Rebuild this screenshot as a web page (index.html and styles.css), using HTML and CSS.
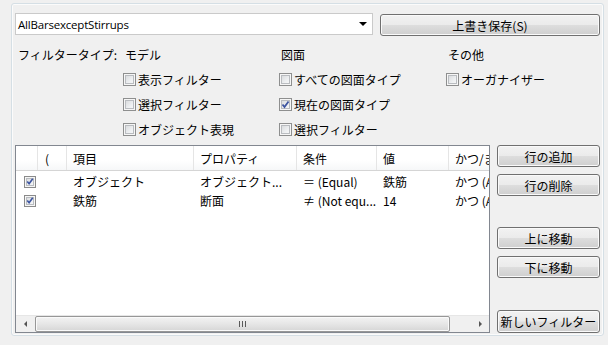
FILE: index.html
```html
<!DOCTYPE html>
<html lang="ja">
<head>
    <meta charset="UTF-8">
    <title>フィルター</title>
    <link rel="stylesheet" href="styles.css">
</head>
<body>
    <div class="panel">
        <div class="top-row">
            <div class="combo">
                <span class="combo-text">AllBarsexceptStirrups</span>
                <span class="combo-arrow"></span>
            </div>
            <button class="btn save-btn">上書き保存(S)</button>
        </div>

        <div class="filter-grid">
            <div class="ft-label">フィルタータイプ:</div>
            <div class="group-title">モデル</div>
            <div class="group-title">図面</div>
            <div class="group-title">その他</div>

            <div></div>
            <label class="check"><span class="cb"></span>表示フィルター</label>
            <label class="check"><span class="cb"></span>すべての図面タイプ</label>
            <label class="check"><span class="cb"></span>オーガナイザー</label>

            <div></div>
            <label class="check"><span class="cb"></span>選択フィルター</label>
            <label class="check"><span class="cb checked"><svg viewBox="0 0 11 11"><path d="M2.5 5.5 L4.5 8 L8.5 2.5" /></svg></span>現在の図面タイプ</label>
            <div></div>

            <div></div>
            <label class="check"><span class="cb"></span>オブジェクト表現</label>
            <label class="check"><span class="cb"></span>選択フィルター</label>
            <div></div>
        </div>

        <div class="bottom">
            <div class="table">
                <div class="t-head t-row">
                    <div class="cell"></div>
                    <div class="cell">(</div>
                    <div class="cell">項目</div>
                    <div class="cell">プロパティ</div>
                    <div class="cell">条件</div>
                    <div class="cell">値</div>
                    <div class="cell clip">かつ/ま</div>
                </div>
                <div class="t-body">
                    <div class="t-row">
                        <div class="cell"><span class="cb small checked"><svg viewBox="0 0 11 11"><path d="M2.5 5.5 L4.5 8 L8.5 2.5" /></svg></span></div>
                        <div class="cell"></div>
                        <div class="cell">オブジェクト</div>
                        <div class="cell">オブジェクト...</div>
                        <div class="cell">＝ (Equal)</div>
                        <div class="cell">鉄筋</div>
                        <div class="cell clip">かつ (A</div>
                    </div>
                    <div class="t-row">
                        <div class="cell"><span class="cb small checked"><svg viewBox="0 0 11 11"><path d="M2.5 5.5 L4.5 8 L8.5 2.5" /></svg></span></div>
                        <div class="cell"></div>
                        <div class="cell">鉄筋</div>
                        <div class="cell">断面</div>
                        <div class="cell">≠ (Not equ...</div>
                        <div class="cell">14</div>
                        <div class="cell clip">かつ (A</div>
                    </div>
                </div>
                <div class="hscroll">
                    <div class="arrow-btn"><span class="tri-left"></span></div>
                    <div class="thumb"><span class="grip"></span></div>
                    <div class="track"></div>
                    <div class="arrow-btn"><span class="tri-right"></span></div>
                </div>
            </div>

            <div class="side-buttons">
                <button class="btn">行の追加</button>
                <button class="btn">行の削除</button>
                <button class="btn gap-big">上に移動</button>
                <button class="btn">下に移動</button>
                <button class="btn push-end">新しいフィルター</button>
            </div>
        </div>
    </div>
</body>
</html>
```

FILE: styles.css
```css
body {
    margin: 0;
    background-color: #f0f0f0;
    font-family: "Noto Sans CJK JP", sans-serif;
    font-size: 12px;
    color: #000;
}
.panel {
    box-sizing: border-box;
    margin: 3px 0 0 11px;
    width: 593px;
    height: 333px;
    padding: 9px 3px 0 3px;
    border: 1px solid #d5dfe5;
    border-radius: 3px;
    box-shadow: inset 0 0 0 1px #fbfbfb;
    display: flex;
    flex-direction: column;
}
.top-row {
    display: flex;
    gap: 7px;
}
.combo {
    box-sizing: border-box;
    width: 358px;
    height: 22px;
    background-color: #fff;
    border: 1px solid #cacaca;
    display: flex;
    align-items: center;
    padding: 0 0 0 2px;
    font-family: "Open Sans", "Noto Sans CJK JP", sans-serif;
    font-size: 11.5px;
    letter-spacing: -0.2px;
}
.combo-text {
    flex: 1;
}
.combo-arrow {
    width: 0;
    height: 0;
    margin-right: 5px;
    border-left: 4px solid transparent;
    border-right: 4px solid transparent;
    border-top: 4px solid #000;
}
.btn {
    box-sizing: border-box;
    height: 22px;
    padding: 0;
    font-family: "Noto Sans CJK JP", sans-serif;
    font-size: 12px;
    color: #000;
    border: 1px solid #707070;
    border-radius: 3px;
    background: linear-gradient(#f2f2f2 0%, #ebebeb 48%, #dddddd 52%, #cfcfcf 100%);
    box-shadow: inset 0 0 0 1px #fafafa;
}
.save-btn {
    width: 220px;
    margin-top: 1px;
}
.filter-grid {
    display: grid;
    grid-template-columns: 108px 156px 167px 1fr;
    grid-auto-rows: 25px;
    align-items: center;
    margin-top: 6px;
}
.ft-label {
    padding-left: 3px;
}
.group-title {
    padding-left: 2px;
}
.check {
    display: flex;
    align-items: center;
    gap: 2px;
}
.cb {
    box-sizing: border-box;
    width: 13px;
    height: 13px;
    border: 1px solid #8e8f8f;
    background: linear-gradient(135deg, #d2d4d6 0%, #eef0f2 60%, #fbfbfb 100%);
    box-shadow: inset 0 0 0 1px #f6f6f6, inset 0 0 0 2px #b9bcc0;
    display: inline-flex;
    align-items: center;
    justify-content: center;
}
.cb svg {
    width: 11px;
    height: 11px;
}
.cb path {
    fill: none;
    stroke: #3d55a0;
    stroke-width: 1.8;
}
.cb.small {
    width: 12px;
    height: 12px;
    border-color: #8a8a8a;
}
.bottom {
    display: flex;
    gap: 7px;
    margin-top: 3px;
}
.table {
    box-sizing: border-box;
    width: 475px;
    height: 188px;
    border: 1px solid #828790;
    background-color: #fff;
    display: flex;
    flex-direction: column;
}
.t-row {
    display: grid;
    grid-template-columns: 22px 29px 127px 103px 80px 72px 1fr;
    height: 19px;
    align-items: center;
}
.t-head {
    height: 24px;
    border-bottom: 1px solid #d5d5d5;
    background: linear-gradient(#ffffff 0%, #ffffff 60%, #f6f7f8 100%);
    align-items: stretch;
}
.t-head .cell {
    display: flex;
    align-items: center;
    border-right: 1px solid #e5e5e5;
}
.t-head .cell:last-child {
    border-right: none;
}
.cell {
    padding-left: 6px;
    white-space: nowrap;
    overflow: hidden;
}
.t-head .cell:nth-child(2) {
    padding-left: 7px;
}
.t-body .cell:first-child {
    padding-left: 8px;
    display: flex;
    align-items: center;
}
.clip {
    overflow: hidden;
}
.t-body {
    flex: 1;
    padding-top: 1px;
}
.hscroll {
    height: 16px;
    display: flex;
    align-items: stretch;
    background: #f0f0f0;
    border-top: 1px solid #e6e6e6;
}
.arrow-btn {
    width: 18px;
    display: flex;
    align-items: center;
    justify-content: center;
}
.tri-left {
    border-top: 3px solid transparent;
    border-bottom: 3px solid transparent;
    border-right: 3px solid #555;
}
.tri-right {
    border-top: 3px solid transparent;
    border-bottom: 3px solid transparent;
    border-left: 3px solid #555;
}
.thumb {
    box-sizing: border-box;
    width: 415px;
    margin: 0 0 0 1px;
    border: 1px solid #979797;
    border-radius: 2px;
    background: linear-gradient(#f3f3f3 0%, #e6e6e6 50%, #d6d6d6 100%);
    box-shadow: inset 0 0 0 1px #fafafa;
    display: flex;
    align-items: center;
    justify-content: center;
}
.grip {
    width: 7px;
    height: 6px;
    background: repeating-linear-gradient(90deg, #5a5a5a 0, #5a5a5a 1px, transparent 1px, transparent 3px);
}
.track {
    flex: 1;
}
.side-buttons {
    width: 103px;
    display: flex;
    flex-direction: column;
    gap: 7px;
}
.side-buttons .btn {
    height: 22px;
}
.gap-big {
    margin-top: 24px;
}
.push-end {
    margin-top: auto;
    height: 23px !important;
}
```
